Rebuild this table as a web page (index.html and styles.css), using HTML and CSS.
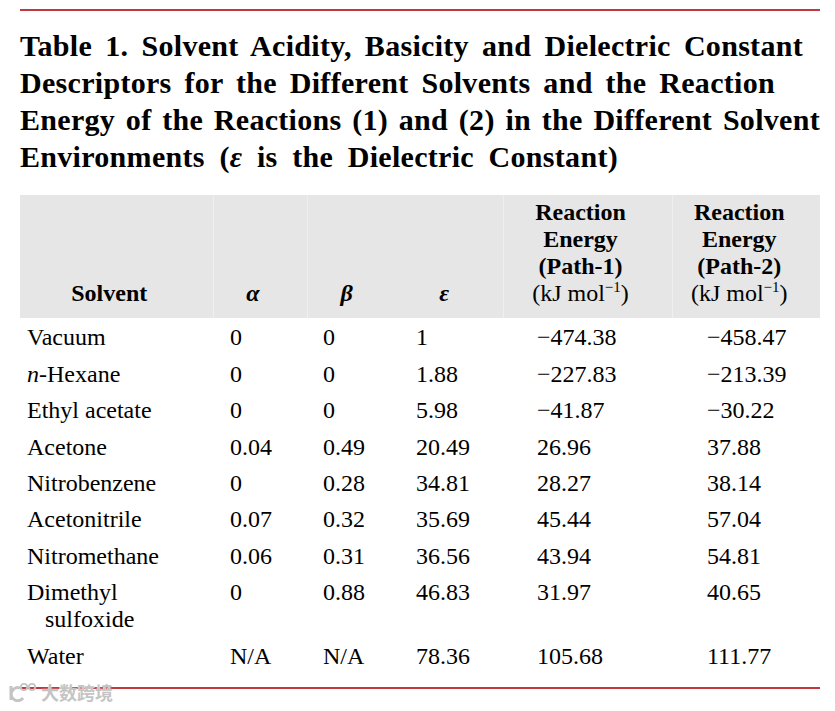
FILE: index.html
```html
<!DOCTYPE html>
<html>
<head>
<meta charset="utf-8">
<link rel="stylesheet" href="styles.css">
</head>
<body>
<div class="page">
  <div class="rule"></div>
  <h1 class="title"><span class="tl l1">Table 1. Solvent Acidity, Basicity and Dielectric Constant</span> <span class="tl l2">Descriptors for the Different Solvents and the Reaction</span> <span class="tl l3">Energy of the Reactions (1) and (2) in the Different Solvent</span> <span class="tl l4">Environments (<i>ε</i> is the Dielectric Constant)</span></h1>
  <table class="data">
    <colgroup>
      <col class="c-solv"><col class="c-a"><col class="c-b"><col class="c-e"><col class="c-p1"><col class="c-p2">
    </colgroup>
    <thead>
      <tr>
        <th>Solvent</th>
        <th class="sep"><i>α</i></th>
        <th class="sep"><i>β</i></th>
        <th><i>ε</i></th>
        <th class="sep"><span class="hl">Reaction</span> <span class="hl">Energy</span> <span class="hl">(Path-1)</span> <span class="hl unit">(kJ mol<sup>−1</sup>)</span></th>
        <th class="sep"><span class="hl">Reaction</span> <span class="hl">Energy</span> <span class="hl">(Path-2)</span> <span class="hl unit">(kJ mol<sup>−1</sup>)</span></th>
      </tr>
    </thead>
    <tbody>
      <tr><td>Vacuum</td><td>0</td><td>0</td><td>1</td><td>−474.38</td><td>−458.47</td></tr>
      <tr><td><i>n</i>-Hexane</td><td>0</td><td>0</td><td>1.88</td><td>−227.83</td><td>−213.39</td></tr>
      <tr><td>Ethyl acetate</td><td>0</td><td>0</td><td>5.98</td><td>−41.87</td><td>−30.22</td></tr>
      <tr><td>Acetone</td><td>0.04</td><td>0.49</td><td>20.49</td><td>26.96</td><td>37.88</td></tr>
      <tr><td>Nitrobenzene</td><td>0</td><td>0.28</td><td>34.81</td><td>28.27</td><td>38.14</td></tr>
      <tr><td>Acetonitrile</td><td>0.07</td><td>0.32</td><td>35.69</td><td>45.44</td><td>57.04</td></tr>
      <tr><td>Nitromethane</td><td>0.06</td><td>0.31</td><td>36.56</td><td>43.94</td><td>54.81</td></tr>
      <tr><td class="hang">Dimethyl sulfoxide</td><td>0</td><td>0.88</td><td>46.83</td><td>31.97</td><td>40.65</td></tr>
      <tr><td>Water</td><td>N/A</td><td>N/A</td><td>78.36</td><td>105.68</td><td>111.77</td></tr>
    </tbody>
  </table>
  <div class="rule bottom"></div>
  <div class="watermark">
    <svg class="wm-logo" width="32" height="20" viewBox="0 0 32 20"><path d="M4 4v14M13 6a6.5 6.5 0 1 0 3 10" fill="none" stroke="#c4c4c4" stroke-width="3"/><circle cx="17" cy="5" r="3.2" fill="none" stroke="#c4c4c4" stroke-width="1.8"/><circle cx="25" cy="5" r="3.2" fill="none" stroke="#c4c4c4" stroke-width="1.8"/></svg>
    <span class="wm-text">大数跨境</span>
  </div>
</div>
</body>
</html>
```

FILE: styles.css
```css
html, body {
  margin: 0;
  padding: 0;
  background: #fff;
}
.page {
  position: relative;
  width: 800px;
  height: 711px;
  padding: 9px 15px 0 20px;
  box-sizing: content-box;
  font-family: "Liberation Serif", "Times New Roman", serif;
  color: #000;
}
.rule {
  height: 2px;
  background: #c0393f;
}
.title {
  margin: 16px 0 20px;
  font-size: 30px;
  line-height: 37px;
  font-weight: bold;
  letter-spacing: 0.3px;
}
.tl {
  display: block;
  white-space: nowrap;
  text-align: justify;
  text-align-last: justify;
}
.l1 { width: 783px; }
.l2 { width: 755px; }
.l3 { width: 800px; }
.l4 { width: 598px; }
.data {
  width: 800px;
  table-layout: fixed;
  border-collapse: collapse;
  font-size: 24px;
  margin-bottom: 14px;
}
.c-solv { width: 193px; }
.c-a { width: 94px; }
.c-b { width: 93px; }
.c-e { width: 103px; }
.c-p1 { width: 169px; }
.c-p2 { width: 148px; }
thead th {
  background: #e6e6e6;
  font-weight: bold;
  line-height: 27px;
  padding: 4px 14px 11px 0;
  text-align: center;
  vertical-align: bottom;
}
thead th.sep {
  border-left: 1px solid #efefef;
}
.hl {
  display: block;
  white-space: nowrap;
}
.unit {
  font-weight: normal;
}
sup {
  font-size: 15px;
  line-height: 0;
  vertical-align: 9px;
}
tbody td {
  line-height: 27px;
  padding: 6.4px 0 3px;
  vertical-align: top;
  text-align: left;
}
tbody td:nth-child(1) { padding-left: 7px; }
tbody td:nth-child(2) { padding-left: 17px; }
tbody td:nth-child(3) { padding-left: 16px; }
tbody td:nth-child(4) { padding-left: 16px; }
tbody td:nth-child(5) { padding-left: 34px; }
tbody td:nth-child(6) { padding-left: 35px; }
tbody td.hang {
  padding-left: 25px;
  text-indent: -18px;
  padding-right: 30px;
}
.watermark {
  position: absolute;
  left: 7px;
  top: 681px;
  z-index: 5;
  display: flex;
  align-items: center;
  gap: 2px;
  height: 22px;
}
.wm-text {
  color: #c4c4c4;
  font-family: "Noto Sans CJK SC", sans-serif;
  font-size: 18px;
  font-weight: bold;
  line-height: 22px;
  text-shadow: 0 0 1px #fff, 0 0 1px #fff;
}
```
